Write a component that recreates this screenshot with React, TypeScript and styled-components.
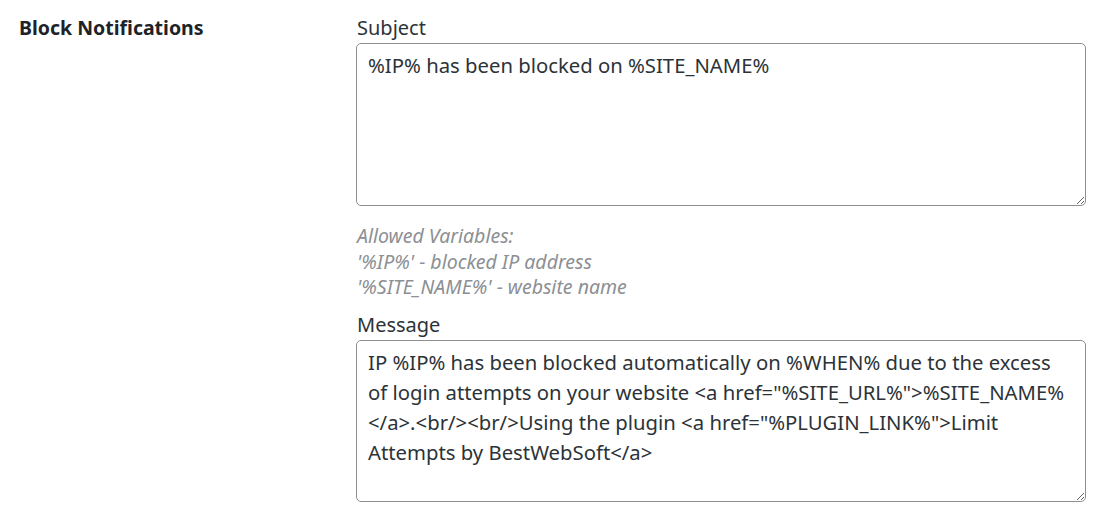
import React from 'react'
import styled, { createGlobalStyle } from 'styled-components'

const GlobalStyle = createGlobalStyle`
  body {
    margin: 0;
    background: #ffffff;
    font-family: "Noto Sans", "Open Sans", sans-serif;
    color: #1d2327;
  }
`

const FormRow = styled.div`
  display: flex;
  align-items: flex-start;
  padding: 14px 0 0 19px;
`

const RowTitle = styled.div`
  width: 337px;
  flex-shrink: 0;
  font-size: 19.5px;
  font-weight: 700;
  line-height: 28px;
  color: #1d2327;
`

const FieldColumn = styled.div`
  display: flex;
  flex-direction: column;
  width: 730px;
`

const FieldLabel = styled.label`
  display: block;
  font-size: 20px;
  line-height: 28px;
  color: #2c3338;
  padding-left: 1px;
`

const TextArea = styled.textarea<{ $height: number }>`
  box-sizing: border-box;
  width: 730px;
  height: ${(props) => props.$height}px;
  margin: 1px 0 0;
  padding: 6px 11px;
  border: 1px solid #8c8f94;
  border-radius: 5px;
  font-family: "Noto Sans", "Open Sans", sans-serif;
  font-size: 20.3px;
  line-height: 30px;
  color: #2c3338;
  background: #ffffff;
  resize: vertical;
  outline: none;
`

const Description = styled.div`
  margin: 17px 0 11px;
  font-size: 19.5px;
  font-style: italic;
  line-height: 25.5px;
  color: #8c8f94;
  padding-left: 1px;
`

const subject = '%IP% has been blocked on %SITE_NAME%'
const message =
  'IP %IP% has been blocked automatically on %WHEN% due to the excess of login attempts on your website <a href="%SITE_URL%">%SITE_NAME%</a>.<br/><br/>Using the plugin <a href="%PLUGIN_LINK%">Limit Attempts by BestWebSoft</a>'

const App = () => {
  return (
    <>
      <GlobalStyle />
      <FormRow>
        <RowTitle>Block Notifications</RowTitle>
        <FieldColumn>
          <FieldLabel>Subject</FieldLabel>
          <TextArea $height={163} defaultValue={subject} />
          <Description>
            Allowed Variables:
            <br />
            '%IP%' - blocked IP address
            <br />
            '%SITE_NAME%' - website name
          </Description>
          <FieldLabel>Message</FieldLabel>
          <TextArea $height={162} defaultValue={message} />
        </FieldColumn>
      </FormRow>
    </>
  )
}

export default App
